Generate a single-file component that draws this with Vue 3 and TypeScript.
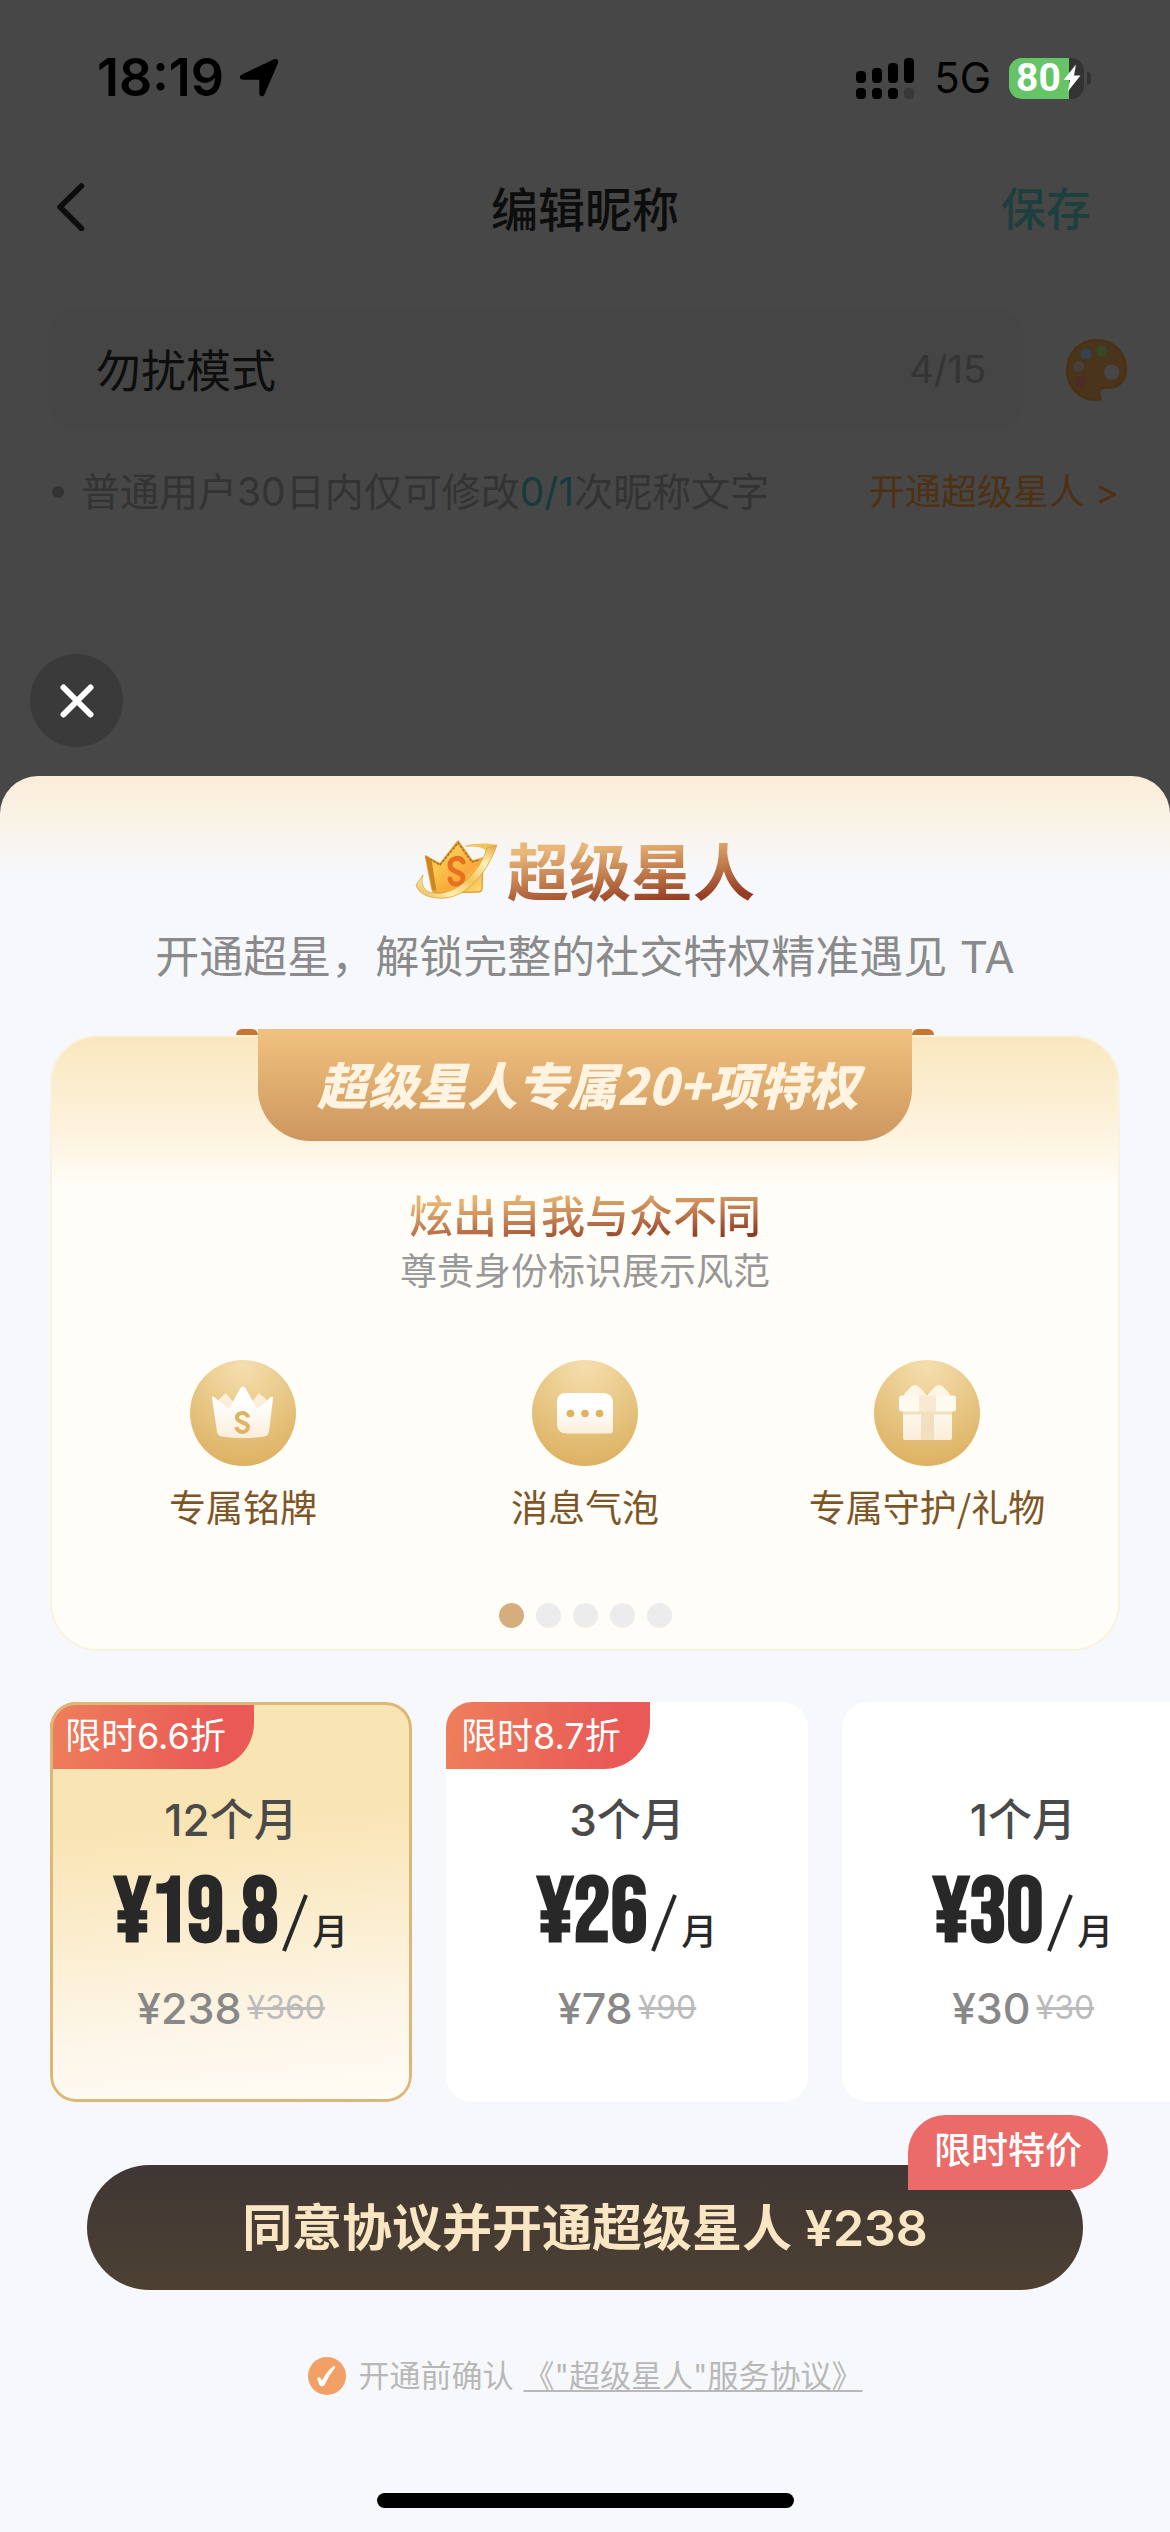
<script setup lang="ts">
import { computed, ref } from 'vue'

interface Plan {
  id: string
  name: string
  monthly: string
  total: string
  original: string
  tag?: string
}

type IconName = 'crown' | 'bubble' | 'gift'

interface Perk {
  icon: IconName
  label: string
}

const nickname = ref('勿扰模式')
const maxLength = 15

const perks: Perk[] = [
  { icon: 'crown', label: '专属铭牌' },
  { icon: 'bubble', label: '消息气泡' },
  { icon: 'gift', label: '专属守护/礼物' },
]

const plans: Plan[] = [
  { id: 'year', name: '12个月', monthly: '¥19.8', total: '¥238', original: '¥360', tag: '限时6.6折' },
  { id: 'quarter', name: '3个月', monthly: '¥26', total: '¥78', original: '¥90', tag: '限时8.7折' },
  { id: 'month', name: '1个月', monthly: '¥30', total: '¥30', original: '¥30' },
]

const slideCount = 5
const activeSlide = ref(1)
const selected = ref('year')
const agreed = ref(true)

const total = computed(() => plans.find((p) => p.id === selected.value)?.total ?? '')
</script>

<template>
  <div class="screen">
    <div class="status">
      <div class="status-side">
        <span class="time">18:19</span>
        <svg class="locate" viewBox="0 0 40 40" aria-hidden="true">
          <path d="M3 16.5 35 1.3c2.700-1.200 5 .9 4 3.600L25.500 36.500c-1.200 2.800-5.200 2.300-5.200-.9V21.800H4.500C.2 21.800-.4 18.100 3 16.500Z" />
        </svg>
      </div>
      <div class="status-side">
        <svg class="signal" viewBox="0 0 58 41" aria-hidden="true">
          <rect x="0" y="13" width="10" height="12" rx="4" />
          <rect x="16" y="10" width="10" height="15" rx="4" />
          <rect x="32" y="5" width="10" height="20" rx="4" />
          <rect x="48" y="0" width="10" height="25" rx="4" />
          <rect x="0" y="30" width="10" height="11" rx="4" />
          <rect x="16" y="30" width="10" height="11" rx="4" />
          <rect x="32" y="30" width="10" height="11" rx="4" />
          <rect x="48" y="30" width="10" height="11" rx="4" fill="#383838" />
        </svg>
        <span class="network">5G</span>
        <div class="battery">
          <span class="battery-body">
            <span class="level">80</span>
            <svg class="bolt" viewBox="0 0 18 28" aria-hidden="true">
              <path d="M13 .5 .5 16H7L4.800 27.500 17.500 11.500H11Z" />
            </svg>
          </span>
          <span class="battery-nub"></span>
        </div>
      </div>
    </div>

    <header class="nav">
      <button class="back" type="button" aria-label="返回">
        <svg viewBox="0 0 28 48" aria-hidden="true">
          <path d="M24.500 3 3 24l21.500 21.500" fill="none" stroke="#0d0d0d" stroke-width="5.500" stroke-linecap="round" stroke-linejoin="round" />
        </svg>
      </button>
      <h1 class="nav-title">编辑昵称</h1>
      <button class="save" type="button">保存</button>
    </header>

    <div class="field-row">
      <label class="field">
        <input v-model="nickname" type="text" :maxlength="maxLength" aria-label="昵称" />
        <span class="count">{{ nickname.length }}/{{ maxLength }}</span>
      </label>
      <button class="palette" type="button" aria-label="昵称颜色">
        <svg viewBox="0 0 60 61" aria-hidden="true">
          <path d="M30 1C13 1 1 14 1 31s13 29 28 29c3 0 5-.5 5-1.500 0-3-2-5-1-8s4-2.500 9-2.500c11 0 17-8 17-18C59 13 47 1 30 1Z" fill="#4a341c" stroke="#4b3011" stroke-width="2" />
          <circle cx="20" cy="14.500" r="5.500" fill="#34434f" />
          <circle cx="35.500" cy="12" r="5.500" fill="#36482a" />
          <circle cx="12.500" cy="27" r="5.500" fill="#484038" />
          <circle cx="14" cy="42" r="5.500" fill="#4d2b26" />
          <circle cx="45" cy="32.500" r="7.500" fill="#474747" />
        </svg>
      </button>
    </div>

    <div class="note">
      <span class="bullet"></span>
      <p>普通用户30日内仅可修改<em>0/1</em>次昵称文字</p>
      <a href="#plans">开通超级星人 &gt;</a>
    </div>

    <button class="close" type="button" aria-label="关闭">
      <svg viewBox="0 0 34 34" aria-hidden="true">
        <path d="M3.500 3.500l27 27M30.500 3.500l-27 27" fill="none" stroke="#fff" stroke-width="6" stroke-linecap="round" />
      </svg>
    </button>

    <main class="sheet">
      <div class="brand">
        <svg class="brand-crown" viewBox="0 0 82 60" aria-hidden="true">
          <defs>
            <linearGradient id="crownGold" x1="0" y1="0" x2="1" y2="1">
              <stop offset="0" stop-color="#e9a92b" />
              <stop offset="0.350" stop-color="#fbc84e" />
              <stop offset="0.650" stop-color="#f8a93a" />
              <stop offset="1" stop-color="#fbe27a" />
            </linearGradient>
            <linearGradient id="ringGold" x1="0" y1="1" x2="1" y2="0">
              <stop offset="0" stop-color="#e2b04c" />
              <stop offset="0.250" stop-color="#fff0b0" />
              <stop offset="0.500" stop-color="#f3c65c" />
              <stop offset="0.750" stop-color="#fff2b8" />
              <stop offset="1" stop-color="#e0a83c" />
            </linearGradient>
          </defs>
          <path d="M50 7C60 4 72 4 82 6 78 11 73 18 69 24 71 18 72 12 69 10 64 7 57 7 50 8Z" fill="#f0c35c" />
          <path d="M10.500 17 25 25 43 2 57.500 22 68 19 67 49q0 4-4 4L21 54q-3 0-4-4Z" fill="url(#crownGold)" stroke="#e3a338" stroke-width="1.500" stroke-linejoin="round" />
          <path d="M11 18 25 26 43 4 57 23 64 21" fill="none" stroke="#a8701d" stroke-width="1.500" stroke-dasharray="3 1" />
          <path d="M10.500 17l6 4 5 31-4-1Z" fill="#cb8522" />
          <path d="M48 23c-3-6-13-4-13 3 0 8 13 6 13 13-1 8-12 8-13 1" fill="none" stroke="#e8701e" stroke-width="5" stroke-linecap="round" />
          <path d="M82 6C74 28 64 40 52 50 43 57 33 60 22 59 10 58 3 53 1 46L8 36C6 43 7 48 12 52 24 58 40 52 52 41 62 31 69 20 72 9Z" fill="url(#ringGold)" stroke="#dba63c" stroke-width="0.800" />
        </svg>
        <h2>超级星人</h2>
      </div>
      <p class="slogan">开通超星，解锁完整的社交特权精准遇见 TA</p>

      <section class="panel">
        <div class="ribbon"><span>超级星人专属20+项特权</span></div>
        <h3 class="panel-title">炫出自我与众不同</h3>
        <p class="panel-sub">尊贵身份标识展示风范</p>
        <ul class="perks">
          <li v-for="perk in perks" :key="perk.label">
            <span class="perk-icon">
              <svg v-if="perk.icon === 'crown'" viewBox="0 0 106 106" aria-hidden="true">
                <path d="M26 42 36 33l8 10 8-8 9 8 8-10 10 9-8 12H34Z" fill="#fbeeda" />
                <path d="M22 37.500q0-1.500 2-.5l15 12L50.500 28q2.500-3 5 0L67 49l14-12q2.500-1 2 1.500L79 72q-1 4-5 4.500-21 3-42 0-4-.5-5-4.500Z" fill="url(#perkWhite)" />
                <path d="M58 57.500c-.5-6-11-6-11 0 0 6 11 4 11 9.500 0 6.500-11 6.500-11.500 0" fill="none" stroke="#e0b362" stroke-width="4" />
                <defs>
                  <linearGradient id="perkWhite" x1="0" y1="0" x2="0" y2="1">
                    <stop offset="0.300" stop-color="#fff" />
                    <stop offset="1" stop-color="#fbeedb" />
                  </linearGradient>
                </defs>
              </svg>
              <svg v-else-if="perk.icon === 'bubble'" viewBox="0 0 106 106" aria-hidden="true">
                <path d="M34 33H71q10 0 10 10V70q0 3.500-3.500 3.500H35q-10 0-10-9V42q0-9 9-9Z" fill="url(#bubbleWhite)" />
                <circle cx="38.500" cy="53.500" r="3.800" fill="#e0b362" />
                <circle cx="53" cy="53.500" r="3.800" fill="#e0b362" />
                <circle cx="67.500" cy="53.500" r="3.800" fill="#e0b362" />
                <defs>
                  <linearGradient id="bubbleWhite" x1="0" y1="0" x2="0" y2="1">
                    <stop offset="0.300" stop-color="#fff" />
                    <stop offset="1" stop-color="#fbeedb" />
                  </linearGradient>
                </defs>
              </svg>
              <svg v-else viewBox="0 0 106 106" aria-hidden="true">
                <path d="M30 38V35q0-2 8-9 3-2 6 0 6 5 9 10 3-5 9-10 3-2 6 0 8 7 8 9v3Z" fill="#fdf5e6" />
                <rect x="29" y="49" width="49" height="31" rx="2" fill="url(#giftWhite)" />
                <rect x="25" y="35.500" width="57" height="16" rx="2.500" fill="#fffaf0" />
                <rect x="45" y="35.500" width="17" height="16" fill="#f8e9d0" />
                <rect x="47" y="51.500" width="13" height="28.500" fill="#f1dfbf" />
                <rect x="29" y="51.500" width="49" height="3" fill="#f3dfba" />
                <defs>
                  <linearGradient id="giftWhite" x1="0" y1="0" x2="0" y2="1">
                    <stop offset="0" stop-color="#fffaf0" />
                    <stop offset="1" stop-color="#faedd8" />
                  </linearGradient>
                </defs>
              </svg>
            </span>
            <span class="perk-label">{{ perk.label }}</span>
          </li>
        </ul>
        <div class="dots">
          <button
            v-for="n in slideCount"
            :key="n"
            type="button"
            :class="{ active: n === activeSlide }"
            :aria-label="`第${n}页`"
            @click="activeSlide = n"
          ></button>
        </div>
      </section>

      <div id="plans" class="plans" role="radiogroup" aria-label="套餐">
        <label v-for="plan in plans" :key="plan.id" class="plan" :class="{ chosen: plan.id === selected }">
          <input v-model="selected" type="radio" name="plan" :value="plan.id" />
          <span v-if="plan.tag" class="plan-tag">{{ plan.tag }}</span>
          <span class="plan-name">{{ plan.name }}</span>
          <span class="plan-price">
            <strong>{{ plan.monthly }}</strong>
            <svg class="slash" viewBox="0 0 26 58" aria-hidden="true">
              <path d="M24 1 2 57" stroke="#282828" stroke-width="4" />
            </svg>
            <span class="unit">月</span>
          </span>
          <span class="plan-total">{{ plan.total }}<s>{{ plan.original }}</s></span>
        </label>
      </div>

      <div class="pay">
        <button class="pay-button" type="button">同意协议并开通超级星人 {{ total }}</button>
        <span class="pay-badge">限时特价</span>
      </div>

      <div class="agreement">
        <label>
          <span class="tick">
            <input v-model="agreed" type="checkbox" />
            <svg v-if="agreed" viewBox="0 0 38 38" aria-hidden="true">
              <path d="M9.500 21.500q3-2.500 4.500 3.500Q19 14 25.500 9.500q2-.5 1 1.500-6 7-10.500 17-2 2-4 0Z" fill="#fff" stroke="#fff" />
            </svg>
          </span>
          <span>开通前确认</span>
        </label>
        <a href="#agreement">《"超级星人"服务协议》</a>
      </div>

      <div class="home"></div>
    </main>
  </div>
</template>

<style>
body {
  margin: 0;
  background: #474747;
}
</style>

<style scoped>
* {
  box-sizing: border-box;
}

.screen {
  display: flex;
  flex-direction: column;
  min-height: 100vh;
  overflow: hidden;
  background: #474747;
  color: #0d0d0d;
  font-family: Inter, "Noto Sans CJK SC", sans-serif;
}

h1,
h2,
h3,
p,
ul {
  margin: 0;
  padding: 0;
}

button,
input {
  margin: 0;
  padding: 0;
  border: 0;
  background: none;
  color: inherit;
  font: inherit;
}

svg {
  display: block;
}

a {
  color: inherit;
  text-decoration: none;
}

/* status bar */
.status {
  display: flex;
  align-items: center;
  justify-content: space-between;
  height: 156px;
  padding: 0 79px 0 97px;
}

.status-side {
  display: flex;
  align-items: center;
}

.time {
  color: #000;
  font-size: 52px;
  font-weight: 600;
  line-height: 60px;
}

.locate {
  width: 40px;
  height: 40px;
  margin-left: 15px;
}

.signal {
  width: 58px;
  height: 41px;
}

.network {
  margin-left: 20px;
  color: #000;
  font-size: 42px;
  line-height: 48px;
}

.battery {
  display: flex;
  align-items: center;
  gap: 3px;
  margin-left: 18px;
}

.battery-body {
  display: flex;
  align-items: center;
  gap: 2px;
  width: 75px;
  height: 41px;
  padding-left: 7px;
  border-radius: 13px;
  background: linear-gradient(90deg, #65c466 80%, #333 80%);
  color: #fff;
}

.level {
  font-family: Roboto, sans-serif;
  font-size: 39px;
  font-weight: 700;
  line-height: 41px;
}

.bolt {
  flex: none;
  width: 18px;
  height: 28px;
  fill: #fff;
}

.battery-nub {
  width: 4px;
  height: 13px;
  border-radius: 0 4px 4px 0;
  background: #333;
}

/* navigation */
.nav {
  display: grid;
  grid-template-columns: 1fr auto 1fr;
  align-items: center;
  height: 102px;
  padding: 0 57px;
}

.back {
  width: 28px;
  height: 48px;
}

.nav-title {
  font-family: "Noto Sans CJK SC", sans-serif;
  font-size: 47px;
  font-weight: 500;
  line-height: 60px;
}

.save {
  justify-self: end;
  margin-right: 22px;
  color: #1d3f3d;
  font-family: "Noto Sans CJK SC", sans-serif;
  font-size: 45px;
  font-weight: 500;
  line-height: 60px;
}

/* nickname field */
.field-row {
  display: flex;
  align-items: center;
  gap: 43px;
  margin-top: 51px;
  padding: 0 43px 0 48px;
}

.field {
  display: flex;
  flex: 1;
  align-items: center;
  height: 120px;
  padding: 0 37px 0 48px;
  border-radius: 26px;
  background: #454545;
}

.field input {
  flex: 1;
  min-width: 0;
  font-family: "Noto Sans CJK SC", sans-serif;
  font-size: 45px;
  line-height: 60px;
  outline: none;
}

.count {
  color: #343434;
  font-size: 38px;
  line-height: 48px;
}

.palette {
  width: 61px;
  height: 61px;
}

.note {
  display: flex;
  align-items: center;
  margin-top: 33px;
  padding: 0 51px 0 52px;
  color: #333;
  font-size: 39px;
  line-height: 60px;
}

.bullet {
  width: 12px;
  height: 12px;
  margin-right: 17px;
  border-radius: 50%;
  background: #333;
}

.note em {
  color: #153b3a;
  font-style: normal;
}

.note a {
  margin-left: auto;
  color: #4e3012;
  font-size: 36px;
}

.close {
  display: grid;
  place-items: center;
  width: 93px;
  height: 93px;
  margin: 132px 0 0 30px;
  border-radius: 50%;
  background: #3a3a3a;
}

.close svg {
  width: 34px;
  height: 34px;
}

/* bottom sheet */
.sheet {
  display: flex;
  flex: 1;
  flex-direction: column;
  margin-top: 29px;
  padding: 53px 0 24px;
  border-radius: 38px 38px 0 0;
  background: linear-gradient(180deg, #fcedd7 0, #f9f3e9 50px, #f7f8fc 96px);
}

.brand {
  display: flex;
  align-items: center;
  justify-content: center;
  gap: 10px;
  height: 80px;
}

.brand-crown {
  width: 82px;
  height: 60px;
}

.brand h2 {
  background: linear-gradient(174deg, #e9b878 24%, #c07a4c 55%, #943c22 84%);
  background-clip: text;
  color: transparent;
  font-family: "Noto Sans CJK SC", sans-serif;
  font-size: 62px;
  font-weight: 600;
  line-height: 80px;
}

.slogan {
  margin-top: 18px;
  color: #8a8a8a;
  font-size: 44px;
  line-height: 60px;
  text-align: center;
}

.panel {
  position: relative;
  margin: 48px 50px 0;
  padding: 152px 0 21px;
  border: 2px solid #f9f2e2;
  border-radius: 48px;
  background: linear-gradient(180deg, #f9e7bd 0, #fdf3df 100px, #fffdf7 150px);
  background-origin: border-box;
  text-align: center;
}

.ribbon {
  position: absolute;
  top: -8px;
  left: 50%;
  width: 654px;
  height: 112px;
  margin-left: -327px;
  padding-left: 6px;
  border-radius: 0 0 52px 52px;
  background: linear-gradient(180deg, #f1c27f, #cd965e);
  font-size: 50px;
  font-style: italic;
  font-weight: 900;
  line-height: 108px;
}

.ribbon::before,
.ribbon::after {
  content: "";
  position: absolute;
  top: 0;
  width: 22px;
  height: 6px;
  border-radius: 12px 12px 0 0;
  background: #c8752f;
}

.ribbon::before {
  right: 100%;
}

.ribbon::after {
  left: 100%;
}

.ribbon span {
  color: #fff4e2;
  font-family: "Noto Sans CJK SC", sans-serif;
}

.panel-title {
  width: fit-content;
  margin: 0 auto;
  background: linear-gradient(176deg, #e5b270 22%, #b9704a 58%, #8f3a22 85%);
  background-clip: text;
  color: transparent;
  font-size: 44px;
  font-weight: 500;
  line-height: 56px;
}

.panel-sub {
  color: #989898;
  font-family: "Noto Sans CJK SC", sans-serif;
  font-size: 37px;
  line-height: 48px;
}

.perks {
  display: grid;
  grid-template-columns: repeat(3, 342px);
  justify-content: center;
  margin-top: 67px;
  list-style: none;
}

.perks li {
  display: flex;
  flex-direction: column;
  align-items: center;
  gap: 16px;
}

.perk-icon {
  width: 106px;
  height: 106px;
  border-radius: 50%;
  background: radial-gradient(circle at 50% 5%, #f5dfae 0, #e4c07a 60%, #dbab59 100%);
}

.perk-label {
  color: #7d5527;
  font-family: "Noto Sans CJK SC", sans-serif;
  font-size: 37px;
  line-height: 48px;
}

.dots {
  display: flex;
  justify-content: center;
  gap: 12px;
  margin-top: 73px;
}

.dots button {
  width: 25px;
  height: 25px;
  border-radius: 50%;
  background: #ececec;
}

.dots button.active {
  background: #d6ae7d;
}

/* plans */
.plans {
  display: flex;
  gap: 34px;
  margin-top: 51px;
  padding-left: 50px;
  overflow: hidden;
}

.plan {
  position: relative;
  display: flex;
  flex: none;
  flex-direction: column;
  align-items: center;
  width: 362px;
  padding: 90px 0 70px;
  border-radius: 26px;
  background: #fff;
  overflow: hidden;
}

.plan.chosen {
  background: linear-gradient(175deg, #f9e4b3 30%, #fdf6e9 80%, #fffcf6);
}

.plan.chosen::after {
  content: "";
  position: absolute;
  inset: 0;
  border: 3px solid #ddb778;
  border-radius: 26px;
}

.plan input {
  position: absolute;
  opacity: 0;
}

.plan-tag {
  position: absolute;
  top: 0;
  left: 0;
  width: 204px;
  height: 67px;
  padding-left: 15px;
  border-radius: 0 0 46px 0;
  background: linear-gradient(100deg, #ee7f5b, #e95a57 80%);
  color: #fff;
  font-size: 36px;
  line-height: 69px;
  white-space: nowrap;
}

.plan-name {
  color: #4a4a4a;
  font-size: 44px;
  font-weight: 500;
  line-height: 56px;
}

.plan-price {
  display: flex;
  align-items: flex-end;
  height: 98px;
  margin-top: 14px;
  padding-bottom: 8px;
  color: #282828;
}

.plan-price strong {
  font-family: "Bebas Neue", "Roboto Condensed", "Liberation Sans Narrow", "Noto Sans CJK SC", sans-serif;
  font-size: 92px;
  font-weight: 700;
  line-height: 76px;
}

.slash {
  width: 26px;
  height: 58px;
  margin-left: 4px;
}

.unit {
  margin-left: 4px;
  font-size: 36px;
  font-weight: 500;
  line-height: 40px;
}

.plan-total {
  display: flex;
  align-items: center;
  gap: 6px;
  height: 48px;
  margin-top: 24px;
  color: #888;
  font-size: 43px;
  font-weight: 500;
  line-height: 48px;
}

.plan-total s {
  color: #bbb;
  font-size: 32px;
  font-weight: 400;
}

/* payment */
.pay {
  position: relative;
  margin: 63px 87px 0;
}

.pay-button {
  display: block;
  width: 100%;
  height: 125px;
  padding-bottom: 8px;
  border-radius: 63px;
  background: linear-gradient(180deg, #403634, #4d4133);
  color: #fbe6c3;
  font-size: 50px;
  font-weight: 600;
}

.pay-badge {
  position: absolute;
  top: -50px;
  right: -25px;
  width: 200px;
  height: 75px;
  border-radius: 38px 38px 38px 0;
  background: #eb6b69;
  color: #fff;
  font-size: 37px;
  font-weight: 500;
  line-height: 72px;
  text-align: center;
}

.agreement {
  display: flex;
  justify-content: center;
  gap: 10px;
  margin-top: 66px;
  color: #b8b8b8;
  font-size: 31px;
  line-height: 40px;
}

.agreement label {
  display: flex;
  align-items: center;
  gap: 13px;
}

.agreement a {
  text-decoration: underline;
  text-decoration-skip-ink: none;
  text-decoration-thickness: 2px;
  text-underline-offset: 3px;
}

.tick {
  position: relative;
  width: 38px;
  height: 38px;
}

.tick input {
  display: block;
  width: 38px;
  height: 38px;
  border-radius: 50%;
  background: #e2e2e2;
  appearance: none;
}

.tick input:checked {
  background: #f2a066;
}

.tick svg {
  position: absolute;
  inset: 0;
  pointer-events: none;
}

.home {
  width: 417px;
  height: 15px;
  margin: auto auto 0;
  border-radius: 8px;
  background: #000;
}
</style>
